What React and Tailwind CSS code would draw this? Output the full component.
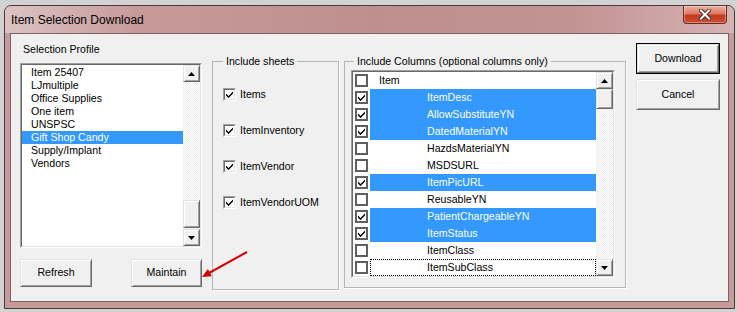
import React from "react";

const PROFILES = [
  "Item 25407",
  "LJmultiple",
  "Office Supplies",
  "One item",
  "UNSPSC",
  "Gift Shop Candy",
  "Supply/Implant",
  "Vendors",
];

const SHEETS = ["Items", "ItemInventory", "ItemVendor", "ItemVendorUOM"];

// [label, checked]
const COLUMNS = [
  ["Item", false],
  ["ItemDesc", true],
  ["AllowSubstituteYN", true],
  ["DatedMaterialYN", true],
  ["HazdsMaterialYN", false],
  ["MSDSURL", false],
  ["ItemPicURL", true],
  ["ReusableYN", false],
  ["PatientChargeableYN", true],
  ["ItemStatus", true],
  ["ItemClass", false],
  ["ItemSubClass", false],
];

function Check() {
  return (
    <svg width="7" height="7" viewBox="0 0 7 7">
      <path d="M0 2.5 L2.5 5 L7 0.5 L7 2.6 L2.5 7.1 L0 4.6 Z" fill="#000" />
    </svg>
  );
}

function Arrow({ up }) {
  return (
    <svg width="7" height="4" viewBox="0 0 7 4">
      <path d={up ? "M0 4 L3.5 0 L7 4 Z" : "M0 0 L3.5 4 L7 0 Z"} fill="#000" />
    </svg>
  );
}

// classic raised 3D box
const raised =
  "border border-t-[#e3e3e3] border-l-[#e3e3e3] border-b-[#696969] border-r-[#696969] shadow-[inset_1px_1px_0_#fff,inset_-1px_-1px_0_#a0a0a0] bg-[#f0f0f0]";

function Scrollbar({ thumbAtEnd }) {
  return (
    <div className="w-[17px] flex flex-col bg-[repeating-conic-gradient(#ffffff_0_25%,#ececec_0_50%)] bg-[length:2px_2px]">
      <div className={`h-[17px] flex items-center justify-center ${raised}`}>
        <Arrow up />
      </div>
      <div className={`flex-1 flex flex-col ${thumbAtEnd ? "justify-end" : "justify-start"}`}>
        <div className={`${thumbAtEnd ? "h-[28px] mb-[1px]" : "h-[20px]"} ${raised}`} />
      </div>
      <div className={`h-[17px] flex items-center justify-center ${raised}`}>
        <Arrow />
      </div>
    </div>
  );
}

function Sunken({ className, children }) {
  return (
    <div className={`border border-t-[#a0a0a0] border-l-[#a0a0a0] border-b-white border-r-white ${className}`}>
      <div className="h-full border border-t-[#696969] border-l-[#696969] border-b-[#e3e3e3] border-r-[#e3e3e3] bg-white flex">
        {children}
      </div>
    </div>
  );
}

function Button({ label, className, isDefault }) {
  const inner = (
    <div className={`h-full flex items-center justify-center text-[#000] ${raised}`}>{label}</div>
  );
  return isDefault ? (
    <div className={`border border-black ${className}`}>{inner}</div>
  ) : (
    <div className={className}>{inner}</div>
  );
}

export default function App() {
  return (
    <div className="relative w-[737px] h-[312px] overflow-hidden bg-[#d2d2d2] pt-[5px] pl-[4px] font-['Liberation_Sans',Arial,sans-serif] text-[10.6px] text-black">
      {/* Window */}
      <div className="w-[731px] h-[304px] rounded-t-[7px] border border-[#4a3a3a] bg-[#c89b9b] flex flex-col">
        {/* Title bar */}
        <div className="h-[27px] flex items-start rounded-t-[6px] bg-[linear-gradient(90deg,#dcc3c3_0%,#c79a9a_18%,#bf8f8f_50%,#c29393_78%,#d7b3b3_100%)]">
          <span className="pl-[6px] pt-[7px] text-[12px] leading-[15px] text-black">Item Selection Download</span>
          <div className="ml-auto mr-[7px] w-[44px] h-[18px] rounded-b-[4px] border border-t-0 border-[#6b2a22] bg-[linear-gradient(180deg,#eeb0a0_0%,#dc7a62_45%,#c4391f_55%,#cc4e34_100%)] shadow-[inset_0_0_0_1px_rgba(255,255,255,0.35)] flex items-center justify-center">
            <svg width="12" height="11" viewBox="0 0 12 11">
              <path d="M2 1.5 L10 9.5 M10 1.5 L2 9.5" stroke="#4a2a2a" strokeWidth="4" strokeLinecap="square" />
              <path d="M2 1.5 L10 9.5 M10 1.5 L2 9.5" stroke="#ffffff" strokeWidth="2" strokeLinecap="square" />
            </svg>
          </div>
        </div>

        {/* Client area */}
        <div className="mx-[5px] h-[269px] border border-[#7d6262] bg-[#f0f0f0] flex">
          {/* Selection profile */}
          <div className="ml-[9px] w-[182px] flex flex-col">
            <div className="mt-[9px] leading-[13px] pl-[3px]">Selection Profile</div>
            <Sunken className="mt-[7px] h-[185px]">
              <div className="flex-1 pt-[1px]">
                {PROFILES.map((p) => (
                  <div
                    key={p}
                    className={`h-[13px] leading-[13px] pl-[9px] ${p === "Gift Shop Candy" ? "bg-[#3399ff] text-white" : ""}`}
                  >
                    {p}
                  </div>
                ))}
              </div>
              <Scrollbar thumbAtEnd />
            </Sunken>
            <div className="mt-[11px] flex justify-between">
              <Button label="Refresh" className="w-[72px] h-[28px]" />
              <Button label="Maintain" className="w-[71px] h-[28px]" />
            </div>
          </div>

          {/* Include sheets */}
          <fieldset className="ml-[10px] mt-[21px] w-[127px] h-[235px] border border-[#b5b5b5] shadow-[1px_1px_0_#fff]">
            <legend className="ml-[10px] px-[3px] leading-[13px]">Include sheets</legend>
            <div className="mt-[20px] pl-[10px] flex flex-col gap-[23px]">
              {SHEETS.map((s) => (
                <div key={s} className="h-[13px] flex items-center gap-[4px]">
                  <div className="w-[13px] h-[13px] border border-t-[#a0a0a0] border-l-[#a0a0a0] border-b-white border-r-white">
                    <div className="h-full border border-t-[#696969] border-l-[#696969] border-b-[#e3e3e3] border-r-[#e3e3e3] bg-white flex items-center justify-center">
                      <Check />
                    </div>
                  </div>
                  <span className="leading-[13px]">{s}</span>
                </div>
              ))}
            </div>
          </fieldset>

          {/* Include columns */}
          <fieldset className="ml-[5px] mt-[21px] w-[282px] h-[233px] border border-[#b5b5b5] shadow-[1px_1px_0_#fff]">
            <legend className="ml-[9px] px-[3px] leading-[13px]">Include Columns (optional columns only)</legend>
            <Sunken className="ml-[6px] mt-[2px] w-[264px] h-[208px]">
              <div className="flex-1">
                {COLUMNS.map(([c, on], i) => {
                  const last = i === COLUMNS.length - 1;
                  const pad = i === 0 ? "pl-[9px]" : last ? "pl-[56px]" : "pl-[57px]";
                  return (
                    <div key={c} className="h-[17px] flex">
                      <div className="w-[17px] flex items-center">
                        <div className="ml-[2px] w-[13px] h-[13px] border-2 border-[#5f5f5f] bg-white flex items-center justify-center">
                          {on && <Check />}
                        </div>
                      </div>
                      <div
                        className={`flex-1 flex items-center leading-[13px] ${pad} ${on ? "bg-[#3399ff] text-white" : ""} ${
                          last ? "border border-dotted border-black" : ""
                        }`}
                      >
                        {c}
                      </div>
                    </div>
                  );
                })}
              </div>
              <Scrollbar />
            </Sunken>
          </fieldset>

          {/* Buttons */}
          <div className="ml-[10px] w-[84px] flex flex-col">
            <Button label="Download" className="mt-[9px] h-[31px]" isDefault />
            <Button label="Cancel" className="mt-[5px] h-[31px]" />
          </div>
        </div>
      </div>

      {/* Red annotation arrow */}
      <svg className="absolute left-0 top-0 pointer-events-none" width="737" height="312" viewBox="0 0 737 312">
        <line x1="247" y1="252" x2="209" y2="273" stroke="#d40000" strokeWidth="2" />
        <path d="M202 277 L211.8 276.2 L207.9 269.1 Z" fill="#d40000" />
      </svg>
    </div>
  );
}
